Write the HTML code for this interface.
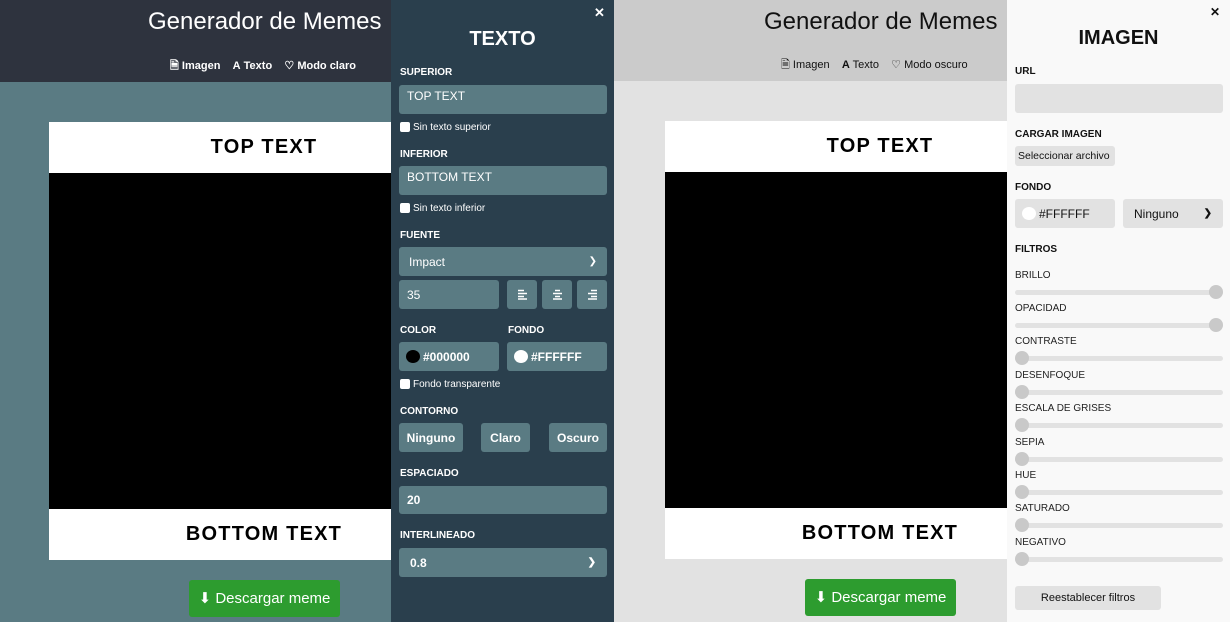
<!DOCTYPE html>
<html><head><meta charset="utf-8"><style>
*{box-sizing:border-box;margin:0;padding:0}
body{width:1230px;height:622px;overflow:hidden;font-family:"Liberation Sans",Arial,sans-serif;position:relative}
.a{position:absolute}
.lbl{position:absolute;font-size:10px;font-weight:bold}
.box{position:absolute;border-radius:3px;font-size:12px;display:flex;align-items:center}
.chk{position:absolute;width:10px;height:10px;background:#fff;border-radius:2px}
.tr{position:absolute;left:1015px;width:208px;height:5px;background:#e2e2e2;border-radius:3px}
.th{position:absolute;width:14px;height:14px;border-radius:50%;background:#c9c9c9}
.sl{position:absolute;left:1015px;font-size:10px;color:#222}
.mt{text-align:center;font-size:20px;font-weight:bold;line-height:51px;letter-spacing:1.2px}
</style></head><body>
<!-- LEFT -->
<div class="a" style="left:0;top:0;width:614px;height:82px;background:#2e333e"></div>
<div class="a" style="left:0;top:82px;width:614px;height:540px;background:#5a7b83"></div>
<div class="a" style="left:148px;top:8px;font-size:24px;color:#fff">Generador de Memes</div>
<div class="a" style="left:170px;top:57px;font-size:11px;color:#fff;font-weight:bold;white-space:nowrap">🗎 Imagen &nbsp;&nbsp;&nbsp;<b>A</b> Texto &nbsp;&nbsp;&nbsp;♡ Modo claro</div>
<div class="a mt" style="left:49px;top:122px;width:430px;height:51px;background:#fff">TOP TEXT</div>
<div class="a" style="left:49px;top:173px;width:430px;height:336px;background:#000"></div>
<div class="a mt" style="left:49px;top:509px;width:430px;height:51px;background:#fff">BOTTOM TEXT</div>
<div class="a" style="left:189px;top:580px;width:151px;height:37px;background:#2d9c2f;border-radius:3px;color:#fff;font-size:15px;line-height:37px;text-align:center">⬇ Descargar meme</div>
<!-- left panel -->
<div class="a" style="left:391px;top:0;width:223px;height:622px;background:#2a3f4d"></div>
<div style="color:#fff">
<div class="a" style="left:594px;top:5px;font-size:13px;font-weight:bold">✕</div>
<div class="a" style="left:391px;width:223px;top:28px;text-align:center;font-size:20px;font-weight:bold">TEXTO</div>
<div class="lbl" style="left:400px;top:67px">SUPERIOR</div>
<div class="box" style="left:399px;top:85px;width:208px;height:29px;background:#5a7b83;align-items:flex-start;padding:4px 8px">TOP TEXT</div>
<div class="chk" style="left:400px;top:122px"></div><div class="a" style="left:413px;top:122px;font-size:10px">Sin texto superior</div>
<div class="lbl" style="left:400px;top:149px">INFERIOR</div>
<div class="box" style="left:399px;top:166px;width:208px;height:29px;background:#5a7b83;align-items:flex-start;padding:4px 8px">BOTTOM TEXT</div>
<div class="chk" style="left:400px;top:203px"></div><div class="a" style="left:413px;top:203px;font-size:10px">Sin texto inferior</div>
<div class="lbl" style="left:400px;top:230px">FUENTE</div>
<div class="box" style="left:399px;top:247px;width:208px;height:29px;background:#5a7b83;padding:0 10px;justify-content:space-between">Impact<span style="font-size:10px">❯</span></div>
<div class="box" style="left:399px;top:280px;width:100px;height:29px;background:#5a7b83;padding:0 8px">35</div>
<div class="box" style="left:507px;top:280px;width:30px;height:29px;background:#5a7b83;justify-content:center"><svg width="11" height="11"><path d="M1 1.5h6M1 4.5h9M1 7.5h6M1 10h9" stroke="#fff" stroke-width="1.4"/></svg></div>
<div class="box" style="left:542px;top:280px;width:30px;height:29px;background:#5a7b83;justify-content:center"><svg width="11" height="11"><path d="M3 1.5h5M1 4.5h9M3 7.5h5M1 10h9" stroke="#fff" stroke-width="1.4"/></svg></div>
<div class="box" style="left:577px;top:280px;width:30px;height:29px;background:#5a7b83;justify-content:center"><svg width="11" height="11"><path d="M4 1.5h6M1 4.5h9M4 7.5h6M1 10h9" stroke="#fff" stroke-width="1.4"/></svg></div>
<div class="lbl" style="left:400px;top:325px">COLOR</div><div class="lbl" style="left:508px;top:325px">FONDO</div>
<div class="box" style="left:399px;top:342px;width:100px;height:29px;background:#5a7b83;padding:0 7px;font-weight:bold"><span style="width:14px;height:13px;border-radius:50%;background:#000;margin-right:3px"></span>#000000</div>
<div class="box" style="left:507px;top:342px;width:100px;height:29px;background:#5a7b83;padding:0 7px;font-weight:bold"><span style="width:14px;height:13px;border-radius:50%;background:#fff;margin-right:3px"></span>#FFFFFF</div>
<div class="chk" style="left:400px;top:379px"></div><div class="a" style="left:413px;top:379px;font-size:10px">Fondo transparente</div>
<div class="lbl" style="left:400px;top:406px">CONTORNO</div>
<div class="box" style="left:399px;top:423px;width:64px;height:29px;background:#5a7b83;justify-content:center;font-weight:bold">Ninguno</div>
<div class="box" style="left:481px;top:423px;width:49px;height:29px;background:#5a7b83;justify-content:center;font-weight:bold">Claro</div>
<div class="box" style="left:549px;top:423px;width:58px;height:29px;background:#5a7b83;justify-content:center;font-weight:bold">Oscuro</div>
<div class="lbl" style="left:400px;top:468px">ESPACIADO</div>
<div class="box" style="left:399px;top:486px;width:208px;height:28px;background:#5a7b83;padding:0 8px;font-weight:bold">20</div>
<div class="lbl" style="left:400px;top:530px">INTERLINEADO</div>
<div class="box" style="left:399px;top:548px;width:208px;height:29px;background:#5a7b83;padding:0 11px;justify-content:space-between;font-weight:bold">0.8<span style="font-size:10px">❯</span></div>
</div>
<!-- RIGHT -->
<div class="a" style="left:614px;top:0;width:393px;height:81px;background:#cbcbcb"></div>
<div class="a" style="left:614px;top:81px;width:393px;height:541px;background:#e2e2e2"></div>
<div class="a" style="left:764px;top:8px;font-size:24px;color:#111">Generador de Memes</div>
<div class="a" style="left:781px;top:56px;font-size:11px;color:#111;white-space:nowrap">🗎 Imagen &nbsp;&nbsp;&nbsp;<b>A</b> Texto &nbsp;&nbsp;&nbsp;♡ Modo oscuro</div>
<div class="a mt" style="left:665px;top:121px;width:430px;height:51px;background:#fff">TOP TEXT</div>
<div class="a" style="left:665px;top:172px;width:342px;height:336px;background:#000"></div>
<div class="a mt" style="left:665px;top:508px;width:430px;height:51px;background:#fff">BOTTOM TEXT</div>
<div class="a" style="left:805px;top:579px;width:151px;height:37px;background:#2d9c2f;border-radius:3px;color:#fff;font-size:15px;line-height:37px;text-align:center">⬇ Descargar meme</div>
<div class="a" style="left:1007px;top:0;width:223px;height:622px;background:#f9f9f9"></div>
<div style="color:#111">
<div class="a" style="left:1210px;top:5px;font-size:12px;font-weight:bold">✕</div>
<div class="a" style="left:1007px;width:223px;top:27px;text-align:center;font-size:20px;font-weight:bold">IMAGEN</div>
<div class="lbl" style="left:1015px;top:66px">URL</div>
<div class="box" style="left:1015px;top:84px;width:208px;height:29px;background:#e2e2e2"></div>
<div class="lbl" style="left:1015px;top:129px">CARGAR IMAGEN</div>
<div class="box" style="left:1015px;top:146px;width:100px;height:20px;background:#e2e2e2;font-size:10.5px;padding:0 3px;white-space:nowrap;overflow:hidden">Seleccionar archivo</div>
<div class="lbl" style="left:1015px;top:182px">FONDO</div>
<div class="box" style="left:1015px;top:199px;width:100px;height:29px;background:#e2e2e2;padding:0 7px"><span style="width:14px;height:13px;border-radius:50%;background:#fff;margin-right:3px"></span>#FFFFFF</div>
<div class="box" style="left:1123px;top:199px;width:100px;height:29px;background:#e2e2e2;padding:0 11px;justify-content:space-between">Ninguno<span style="font-size:10px;font-weight:bold">❯</span></div>
<div class="lbl" style="left:1015px;top:244px">FILTROS</div>
<div class="sl" style="top:270px">BRILLO</div><div class="tr" style="top:290px"></div><div class="th" style="left:1209px;top:285px"></div>
<div class="sl" style="top:303px">OPACIDAD</div><div class="tr" style="top:323px"></div><div class="th" style="left:1209px;top:318px"></div>
<div class="sl" style="top:336px">CONTRASTE</div><div class="tr" style="top:356px"></div><div class="th" style="left:1015px;top:351px"></div>
<div class="sl" style="top:370px">DESENFOQUE</div><div class="tr" style="top:390px"></div><div class="th" style="left:1015px;top:385px"></div>
<div class="sl" style="top:403px">ESCALA DE GRISES</div><div class="tr" style="top:423px"></div><div class="th" style="left:1015px;top:418px"></div>
<div class="sl" style="top:437px">SEPIA</div><div class="tr" style="top:457px"></div><div class="th" style="left:1015px;top:452px"></div>
<div class="sl" style="top:470px">HUE</div><div class="tr" style="top:490px"></div><div class="th" style="left:1015px;top:485px"></div>
<div class="sl" style="top:503px">SATURADO</div><div class="tr" style="top:523px"></div><div class="th" style="left:1015px;top:518px"></div>
<div class="sl" style="top:537px">NEGATIVO</div><div class="tr" style="top:557px"></div><div class="th" style="left:1015px;top:552px"></div>
<div class="box" style="left:1015px;top:586px;width:146px;height:24px;background:#e2e2e2;justify-content:center;font-size:11px">Reestablecer filtros</div>
</div>
</body></html>
